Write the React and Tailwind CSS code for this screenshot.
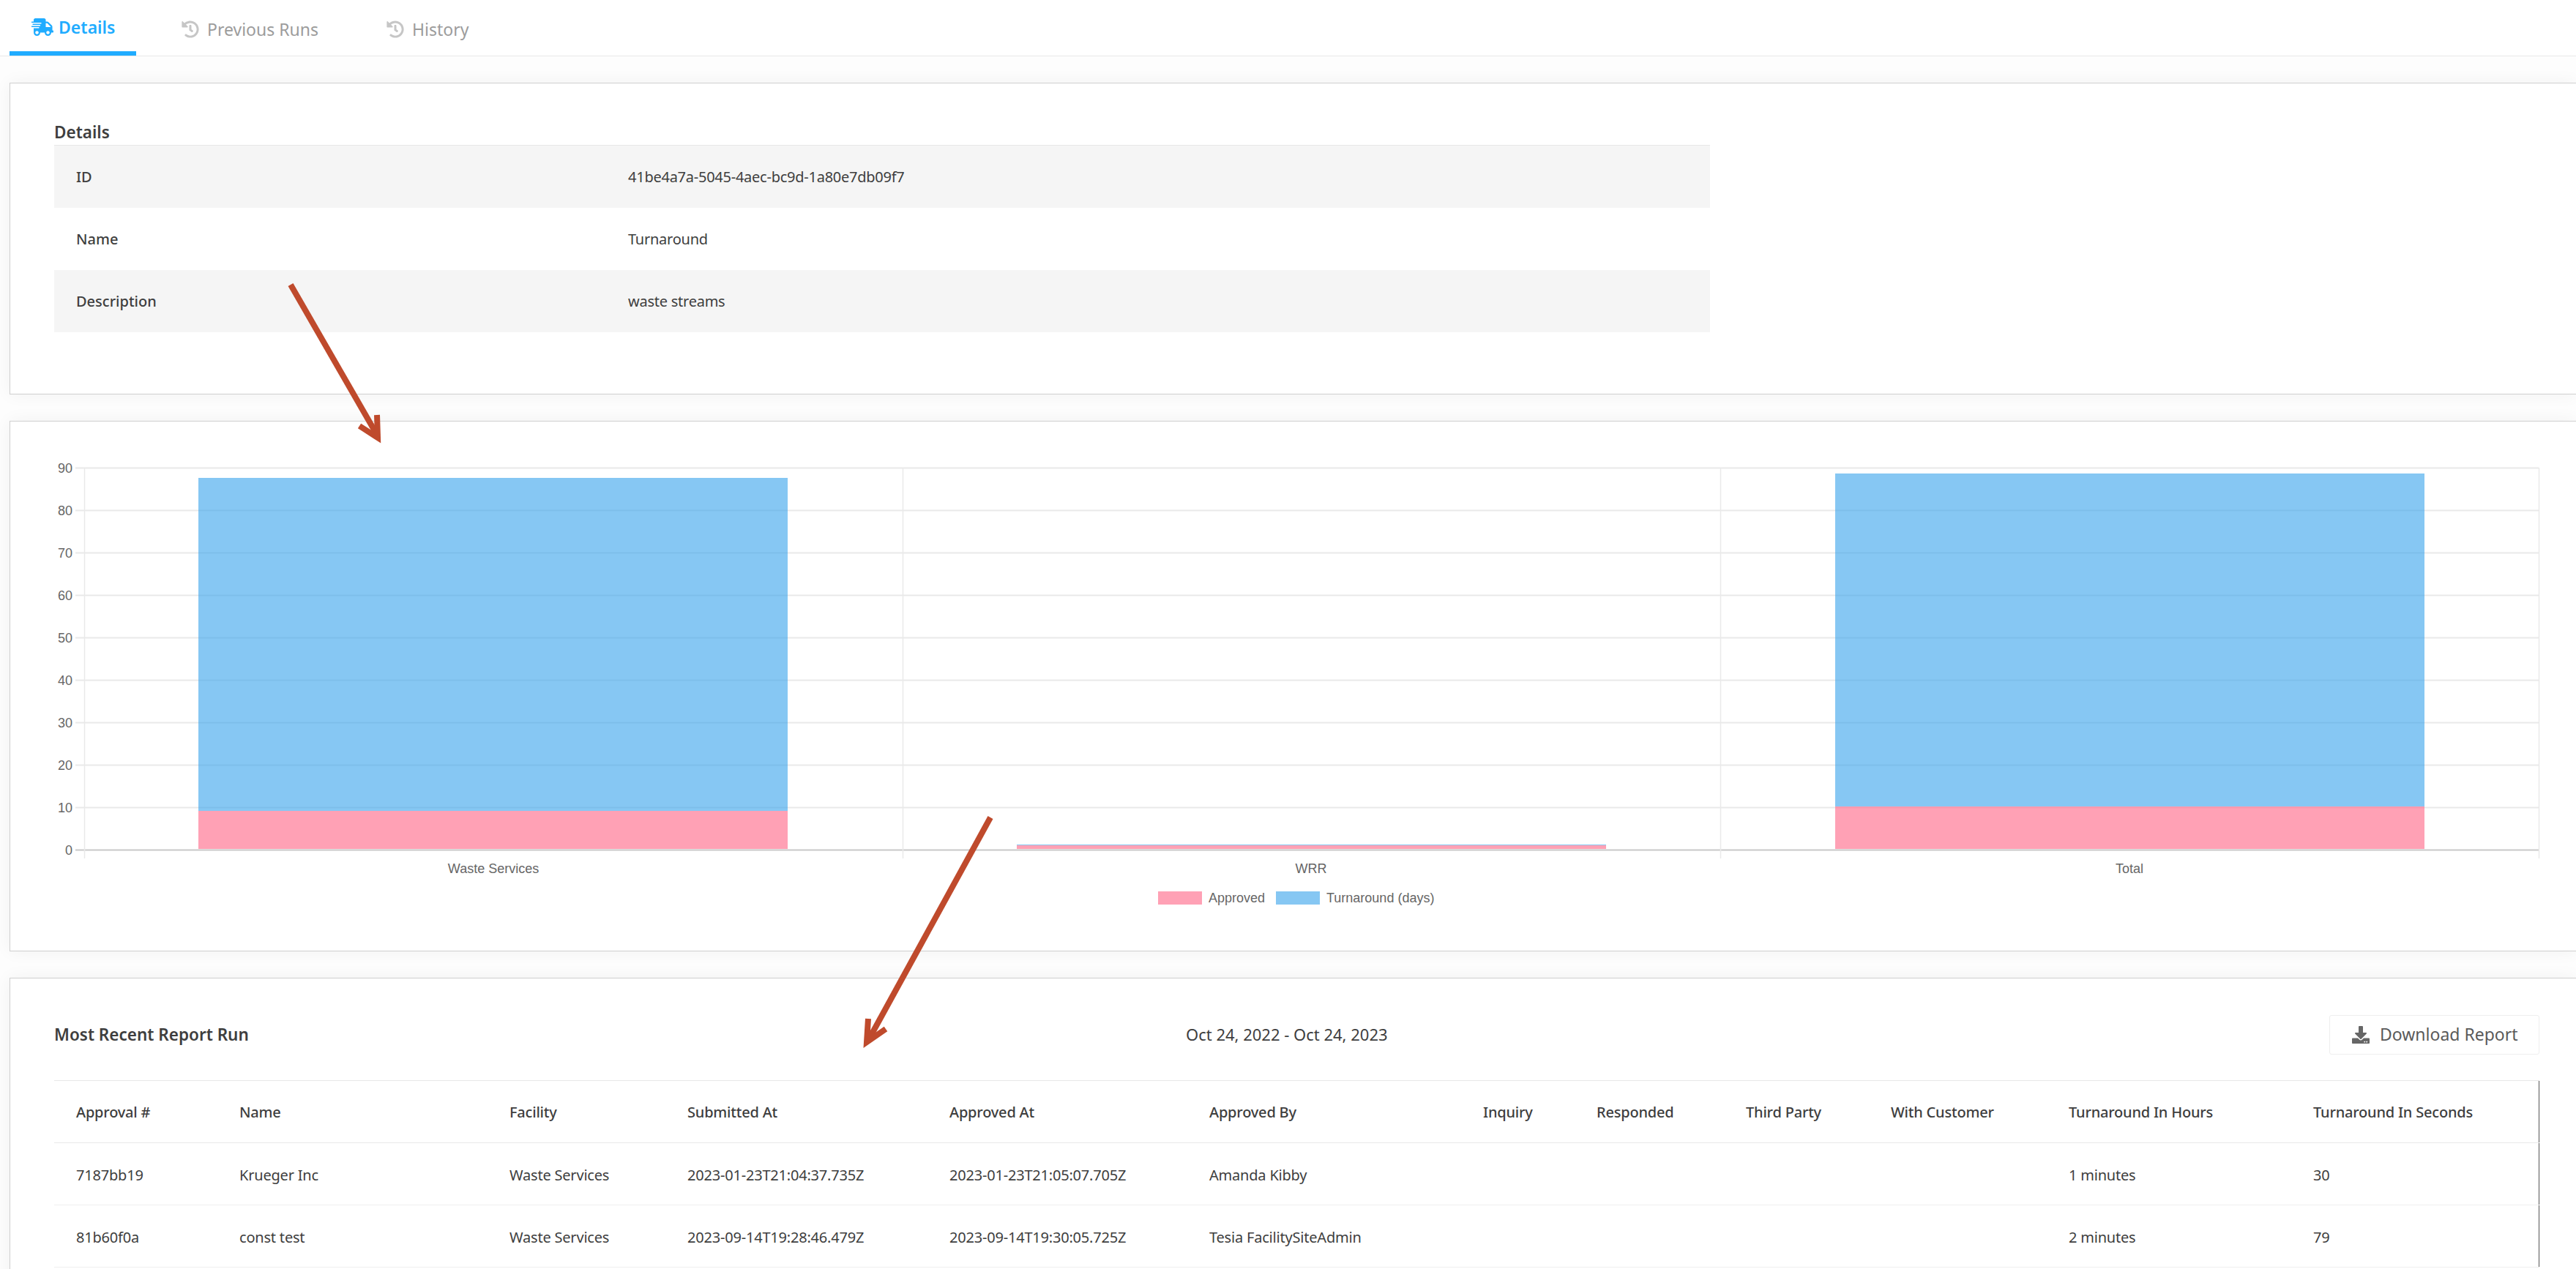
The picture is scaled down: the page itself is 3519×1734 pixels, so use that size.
import React from "react";
import { FaShippingFast, FaHistory, FaDownload } from "react-icons/fa";

const FONT = "font-['Noto_Sans',sans-serif]";

function Tab({ icon, label, active, className }) {
  return (
    <div className={`flex items-center justify-start text-[23px] ${active ? "h-[76px] gap-[7px] border-b-[6px] border-[#20acff] pl-[30px] pt-[4px] font-semibold text-[#20acff]" : "h-[70px] gap-[11px] pt-[10px] text-[#9c9c9c]"} ${className}`}>
      {icon}
      <span>{label}</span>
    </div>
  );
}

function Card({ children, className = "" }) {
  return (
    <section className={`ml-[13px] border border-r-0 border-[#cfcfcf] bg-white shadow-[0_0_22px_rgba(0,0,0,0.05)] ${className}`}>
      {children}
    </section>
  );
}

const detailRows = [
  ["ID", "41be4a7a-5045-4aec-bc9d-1a80e7db09f7", true],
  ["Name", "Turnaround", false],
  ["Description", "waste streams", true],
];

function Chart() {
  const Y0 = 1161, STEP = 58;
  const ticks = [0, 10, 20, 30, 40, 50, 60, 70, 80, 90];
  const verticals = [115, 1233, 2350, 3468];
  const bars = [
    { x: 271, blueTop: 653, pinkTop: 1108 },
    { x: 1389, blueTop: 1154, pinkTop: 1155 },
    { x: 2507, blueTop: 647, pinkTop: 1102 },
  ];
  const labels = [["Waste Services", 674], ["WRR", 1791], ["Total", 2909]];
  return (
    <svg width="3505" height="723" viewBox="14 576 3505 723" className="block">
      <g fontFamily="'Liberation Sans',sans-serif" fontSize="18" fill="#666">
        {ticks.map((t) => {
          const y = Y0 - (t / 10) * STEP;
          return (
            <g key={t}>
              <line x1="103" x2="3468" y1={y + 0.5} y2={y + 0.5} stroke={t === 0 ? "#c8c8c8" : "#e9e9e9"} strokeWidth="2" />
              <text x="99" y={y + 7} textAnchor="end">{t}</text>
            </g>
          );
        })}
        {verticals.map((x) => (
          <line key={x} x1={x + 0.5} x2={x + 0.5} y1="639" y2="1173" stroke="#e9e9e9" strokeWidth="1.5" />
        ))}
        {bars.map((b) => (
          <g key={b.x}>
            <rect x={b.x} y={b.blueTop} width="805" height={b.pinkTop - b.blueTop} fill="#36a2eb" fillOpacity="0.6" />
            <rect x={b.x} y={b.pinkTop} width="805" height={1160 - b.pinkTop} fill="#ff6384" fillOpacity="0.6" />
          </g>
        ))}
        {labels.map(([l, x]) => (
          <text key={l} x={x} y="1193" textAnchor="middle">{l}</text>
        ))}
        <rect x="1582" y="1218" width="60" height="18" fill="#ffa1b5" />
        <text x="1651" y="1233">Approved</text>
        <rect x="1743" y="1218" width="60" height="18" fill="#86c7f3" />
        <text x="1812" y="1233">Turnaround (days)</text>
      </g>
    </svg>
  );
}

const columns = [
  ["Approval #", "w-[223px]"],
  ["Name", "w-[369px]"],
  ["Facility", "w-[243px]"],
  ["Submitted At", "w-[358px]"],
  ["Approved At", "w-[355px]"],
  ["Approved By", "w-[374px]"],
  ["Inquiry", "w-[155px]"],
  ["Responded", "w-[204px]"],
  ["Third Party", "w-[198px]"],
  ["With Customer", "w-[243px]"],
  ["Turnaround In Hours", "w-[334px]"],
  ["Turnaround In Seconds", "w-[338px]"],
];

const reportRows = [
  ["7187bb19", "Krueger Inc", "Waste Services", "2023-01-23T21:04:37.735Z", "2023-01-23T21:05:07.705Z", "Amanda Kibby", "", "", "", "", "1 minutes", "30"],
  ["81b60f0a", "const test", "Waste Services", "2023-09-14T19:28:46.479Z", "2023-09-14T19:30:05.725Z", "Tesia FacilitySiteAdmin", "", "", "", "", "2 minutes", "79"],
];

function Arrows() {
  return (
    <svg width="3519" height="1734" viewBox="0 0 3519 1734" className="pointer-events-none absolute left-0 top-0">
      <g stroke="#bf4a2c" strokeWidth="8" fill="none">
        <path d="M397 389 L516 596" />
        <path d="M491 582 L516 598 L515 567" />
        <path d="M1353 1117 L1187 1420" />
        <path d="M1186 1392 L1184 1424 L1210 1406" />
      </g>
    </svg>
  );
}

export default function App() {
  return (
    <div className={`relative h-[1734px] w-[3519px] overflow-hidden bg-[#fdfdfd] text-[#3e3e3e] ${FONT}`}>
      <nav className="flex h-[77px] items-start border-b border-[#e8e8e8] bg-white pl-[13px]">
        <Tab active className="w-[173px]" label="Details" icon={<FaShippingFast className="h-[24px] w-[30px]" />} />
        <Tab className="ml-[62px] w-[230px]" label="Previous Runs" icon={<FaHistory className="h-[24px] w-[24px] text-[#c6c6c6]" />} />
        <Tab className="ml-[50px] w-[130px]" label="History" icon={<FaHistory className="h-[24px] w-[24px] text-[#c6c6c6]" />} />
      </nav>

      <div className="flex flex-col gap-[36px] pt-[36px]">
        <Card className="h-[426px] pl-[60px] pt-[52px]">
          <h2 className="mb-[2px] text-[22.5px] font-semibold leading-[30px]">Details</h2>
          <div className="w-[2262px] border-t border-[#e8e8e8] text-[20px]">
            {detailRows.map(([k, v, shade]) => (
              <div key={k} className={`flex h-[85px] items-center pl-[30px] ${shade ? "bg-[#f5f5f5]" : "bg-white"}`}>
                <span className="w-[754px] font-medium">{k}</span>
                <span className="tracking-[-0.25px]">{v}</span>
              </div>
            ))}
          </div>
        </Card>

        <Card className="h-[725px]">
          <Chart />
        </Card>

        <Card className="h-[500px] pl-[60px] pr-[50px]">
          <div className="relative flex h-[139px] items-center justify-between pt-[14px]">
            <h2 className="text-[22.5px] font-semibold">Most Recent Report Run</h2>
            <span className="absolute left-[1546px] text-[22px]">Oct 24, 2022 - Oct 24, 2023</span>
            <button className="flex h-[54px] w-[287px] items-center gap-[14px] rounded-[3px] border border-[#eeeeee] bg-white pl-[30px] text-[23px] text-[#5a5a5a]">
              <FaDownload className="h-[24px] w-[24px] text-[#666]" />
              Download Report
            </button>
          </div>
          <table className="w-[3394px] table-fixed border-r border-[#555] text-left text-[20px] tracking-[-0.2px]">
            <thead>
              <tr className="h-[85px] border-y border-[#e8e8e8]">
                {columns.map(([c, w]) => (
                  <th key={c} className={`${w} pl-[30px] pt-[2px] font-medium`}>{c}</th>
                ))}
              </tr>
            </thead>
            <tbody>
              {reportRows.map((row) => (
                <tr key={row[0]} className="h-[85px] border-b border-[#efefef]">
                  {row.map((c, i) => (
                    <td key={i} className="whitespace-nowrap pl-[30px] pt-[3px]">{c}</td>
                  ))}
                </tr>
              ))}
            </tbody>
          </table>
        </Card>
      </div>
      <Arrows />
    </div>
  );
}
